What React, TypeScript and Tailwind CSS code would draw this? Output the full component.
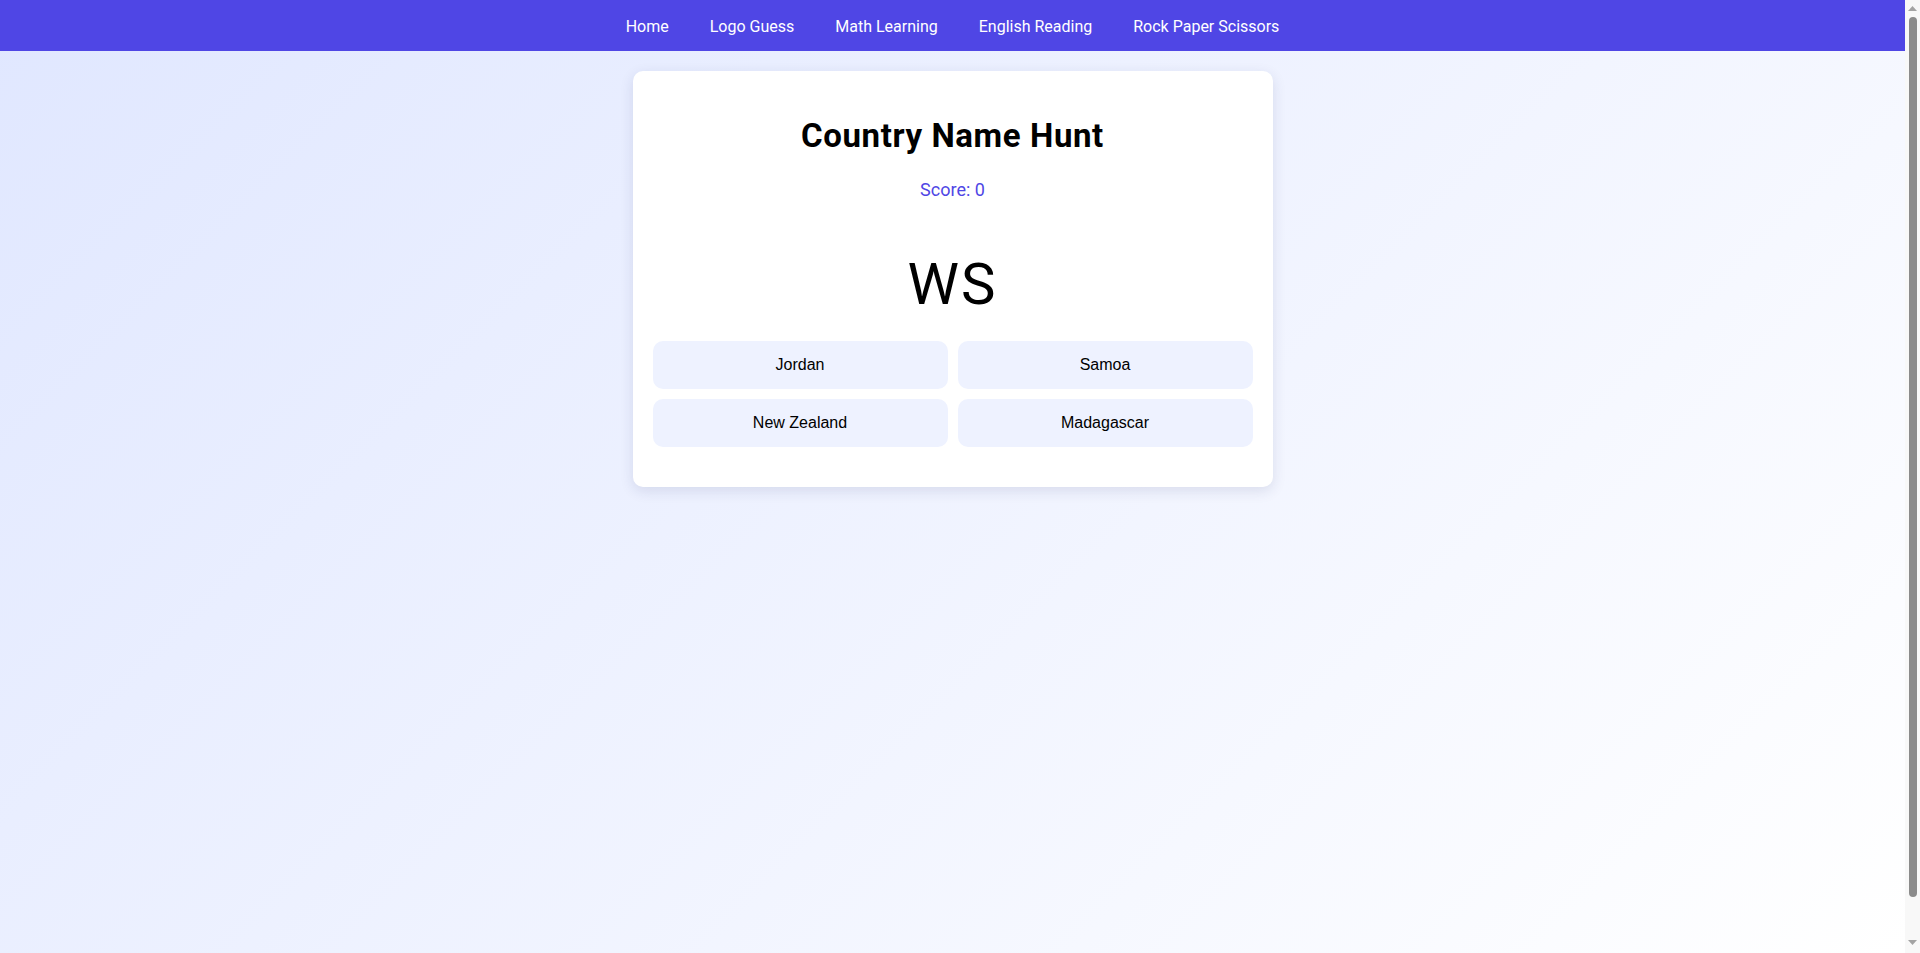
import { useState } from "react";

const navLinks = ["Home", "Logo Guess", "Math Learning", "English Reading", "Rock Paper Scissors"];

// Current round: country code with its answer options
const round = {
  code: "WS",
  options: ["Jordan", "Samoa", "New Zealand", "Madagascar"],
};

// Classic page scrollbar at the right edge
function Scrollbar() {
  return (
    <aside className="w-[15px] shrink-0 bg-[#f8f8f8] flex flex-col items-center">
      <div className="h-[17px] flex items-center justify-center">
        <svg width="9" height="5" viewBox="0 0 9 5">
          <path d="M4.5 0 L9 5 L0 5 Z" fill="#a3a3a3" />
        </svg>
      </div>
      <div className="w-[8px] h-[880px] rounded-full bg-[#8b8b8b]" />
      <div className="flex-1 flex items-end justify-center pb-[8px]">
        <svg width="9" height="5" viewBox="0 0 9 5">
          <path d="M0 0 L9 0 L4.5 5 Z" fill="#a3a3a3" />
        </svg>
      </div>
    </aside>
  );
}

export default function App() {
  const [score] = useState(0);

  return (
    <div className="h-screen flex overflow-hidden font-['Roboto','Liberation_Sans',sans-serif] text-black">
      <div className="flex-1 min-w-0 bg-[linear-gradient(135deg,#e0e7ff_0%,#ffffff_100%)]">
        {/* Top navigation */}
        <nav className="h-[51px] pt-[2px] bg-[#4f46e5] flex items-center justify-center gap-[41px]">
          {navLinks.map((link) => (
            <a key={link} href="#" className="text-white text-[16px] leading-[21px]">
              {link}
            </a>
          ))}
        </nav>

        {/* Game area */}
        <main className="pt-5">
          <div className="w-[640px] mx-auto bg-white rounded-[10px] shadow-[0_4px_14px_rgba(30,41,99,0.12)] px-5 pt-5 pb-10 text-center">
            <h1 className="mt-[25px] text-[33px] leading-[40px] font-bold tracking-[0.6px]">Country Name Hunt</h1>
            <p className="mt-[22px] text-[18px] leading-[24px] text-[#4f46e5]">Score: {score}</p>

            <div className="mt-[50px] text-[58px] leading-[64px] tracking-[2px]">{round.code}</div>

            <div className="mt-[25px] grid grid-cols-2 gap-[10px]">
              {round.options.map((option) => (
                <button
                  key={option}
                  className="h-12 rounded-[10px] bg-[#eef2ff] font-['Liberation_Sans',Arial,sans-serif] text-[16px] text-black"
                >
                  {option}
                </button>
              ))}
            </div>
          </div>
        </main>
      </div>
      <Scrollbar />
    </div>
  );
}
